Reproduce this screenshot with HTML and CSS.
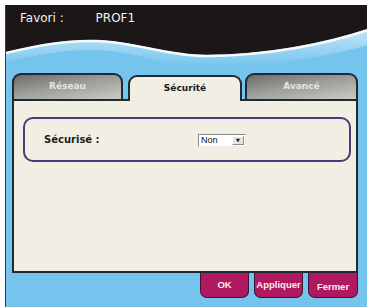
FILE: index.html
```html
<!DOCTYPE html>
<html lang="fr">
<head>
    <meta charset="UTF-8">
    <title>Favori PROF1</title>
    <link rel="stylesheet" href="styles.css">
</head>
<body>
    <div class="frame">
        <div class="header">
            <svg class="wave" width="362" height="68" viewBox="0 0 362 68">
                <defs>
                    <linearGradient id="band" x1="0" y1="0" x2="0" y2="1">
                        <stop offset="0" stop-color="#c4e6f8"/>
                        <stop offset="1" stop-color="#74c4ee"/>
                    </linearGradient>
                </defs>
                <path d="M0,47 C30,40 60,34 90,35 C130,36 160,50 200,50 C260,50 320,38 362,24 V40 C320,52 260,62 200,62 C160,62 130,46 90,45 C60,44 30,50 0,57 Z" fill="url(#band)"/>
                <path d="M0,0 H362 V24 C320,38 260,50 200,50 C160,50 130,36 90,35 C60,34 30,40 0,47 Z" fill="#1b1716"/>
                <path d="M0,48 C30,41 60,35 90,36 C130,37 160,51 200,51 C260,51 320,39 362,25" fill="none" stroke="#f4f9fc" stroke-width="2.5"/>
            </svg>
            <span class="fav-label">Favori :</span>
            <span class="fav-name">PROF1</span>
        </div>

        <div class="dialog">
            <div class="tabs">
                <div class="tab tab-net">Réseau</div>
                <div class="tab tab-sec active">Sécurité</div>
                <div class="tab tab-adv">Avancé</div>
            </div>

            <div class="panel">
                <div class="group">
                    <span class="field-label">Sécurisé :</span>
                    <div class="select">
                        <span class="select-value">Non</span>
                        <span class="select-arrow">&#9660;</span>
                    </div>
                </div>
            </div>

            <div class="buttons">
                <div class="btn btn-ok">OK</div>
                <div class="btn btn-apply">Appliquer</div>
                <div class="btn btn-close">Fermer</div>
            </div>
        </div>
    </div>
</body>
</html>
```

FILE: styles.css
```css
body {
    margin: 0;
    padding: 5px 0 0 5px;
    background-color: #ffffff;
    font-family: "DejaVu Sans", Verdana, sans-serif;
}

.frame {
    width: 361px;
    height: 302px;
    border-left: 1px solid #3a3a3a;
    background-color: #74c4ee;
    overflow: hidden;
}

.header {
    position: relative;
    height: 68px;
    padding: 6px 0 0 14px;
    box-sizing: border-box;
    color: #f2f2f2;
    font-size: 12px;
    line-height: 14px;
}

.wave {
    position: absolute;
    top: 0;
    left: 0;
}

.fav-label,
.fav-name {
    position: relative;
}

.fav-name {
    margin-left: 28px;
}

.dialog {
    margin-left: 6px;
    width: 346px;
}

.tabs {
    display: flex;
    align-items: flex-end;
    height: 26px;
}

.tab {
    height: 24px;
    border: 2px solid #1f2a33;
    border-bottom: none;
    border-radius: 9px 9px 0 0;
    box-sizing: content-box;
    font-size: 9px;
    font-weight: bold;
    line-height: 22px;
    text-align: center;
    color: #e4e4e0;
    background: linear-gradient(170deg, #6a6a6a 0%, #9c9c98 45%, #cbcac2 100%);
}

.tab-net {
    width: 107px;
    margin-right: 5px;
}

.tab-sec {
    width: 110px;
    margin-right: 3px;
}

.tab-adv {
    width: 109px;
}

.tab.active {
    position: relative;
    z-index: 1;
    margin-bottom: -2px;
    background: #f1efe3;
    color: #1a1a1a;
}

.panel {
    position: relative;
    height: 170px;
    border: 2px solid #1f2a33;
    background-color: #f1efe3;
    padding: 16px 0 0 9px;
    box-sizing: content-box;
    height: 154px;
    z-index: 0;
}

.group {
    display: flex;
    align-items: center;
    width: 324px;
    height: 41px;
    border: 2px solid #4a3b78;
    border-radius: 10px;
    padding-left: 19px;
    box-sizing: content-box;
    width: 305px;
}

.field-label {
    width: 154px;
    font-size: 10px;
    font-weight: bold;
    color: #1e1e1e;
}

.select {
    display: flex;
    align-items: center;
    width: 46px;
    height: 11px;
    border: 1px solid #8a8a8a;
    border-right-color: #e8e8e8;
    border-bottom-color: #e8e8e8;
    background-color: #ffffff;
    margin-top: 1px;
}

.select-value {
    flex: 1;
    padding-left: 2px;
    font-family: "Liberation Sans", Arial, sans-serif;
    font-size: 9px;
    line-height: 11px;
    color: #111111;
}

.select-arrow {
    width: 12px;
    height: 9px;
    margin-right: 1px;
    background-color: #e6e4dc;
    border: 1px solid #ffffff;
    border-right-color: #8a8a8a;
    border-bottom-color: #8a8a8a;
    box-sizing: border-box;
    font-size: 5px;
    line-height: 7px;
    text-align: center;
    color: #111111;
}

.buttons {
    display: flex;
    justify-content: flex-end;
    gap: 5px;
    margin-top: -1px;
}

.btn {
    width: 47px;
    height: 25px;
    border: 1.5px solid #3a1630;
    border-top: none;
    border-radius: 0 0 7px 7px;
    background-color: #b0195f;
    color: #f4eef2;
    font-family: "Liberation Sans", Arial, sans-serif;
    font-size: 9.5px;
    font-weight: bold;
    line-height: 26px;
    text-align: center;
}

.btn-close {
    width: 48px;
    line-height: 29px;
}
```
